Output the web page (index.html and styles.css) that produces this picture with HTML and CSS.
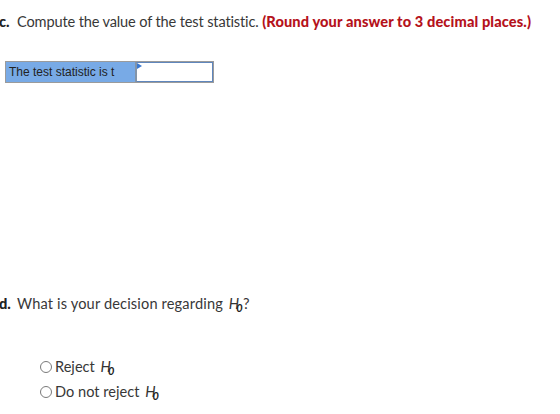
FILE: index.html
```html
<!DOCTYPE html>
<html>
<head>
	<meta charset="utf-8">
	<title>Hypothesis test</title>
	<link rel="stylesheet" href="styles.css">
</head>
<body>

	<div class="part part-c">
		<p class="prompt"><b class="letter">c.</b>Compute the value of the test statistic. <strong class="hint">(Round your answer to 3 decimal places.)</strong></p>

		<div class="answer-table">
			<div class="answer-label">The test statistic is t</div>
			<div class="answer-cell"><span class="flag"></span><input class="answer-input" type="text"></div>
		</div>
	</div>

	<div class="part part-d">
		<p class="prompt"><b class="letter">d.</b>What is your decision regarding <span class="hyp"><i>H</i><sub>0</sub></span>?</p>

		<ul class="choices">
			<li><label><span class="radio"></span>Reject <span class="hyp"><i>H</i><sub>0</sub></span></label></li>
			<li><label><span class="radio"></span>Do not reject <span class="hyp"><i>H</i><sub>0</sub></span></label></li>
		</ul>
	</div>

</body>
</html>
```

FILE: styles.css
```css
body {
	margin: 0;
	background-color: #ffffff;
	color: #383838;
	font-family: "Lato", "Open Sans", sans-serif;
	font-size: 14.6px;
}

.prompt {
	margin: 0;
	line-height: 20px;
}

.part-c .prompt {
	letter-spacing: -0.15px;
}

.part-d .prompt {
	letter-spacing: 0.15px;
}

.letter {
	display: inline-block;
	width: 18px;
	margin-left: -1px;
	font-weight: 900;
	letter-spacing: 0;
	color: #222222;
}

.hint {
	font-weight: 900;
	letter-spacing: 0.12px;
	color: #b5121b;
}

.part-c {
	padding-top: 12px;
}

/* answer box: blue label cell next to the input */
.answer-table {
	display: flex;
	width: 207px;
	height: 20px;
	margin: 29px 0 0 5px;
	border: 1px solid #9b9b9b;
}

.answer-label {
	width: 126px;
	padding-left: 3px;
	background-color: #78aae6;
	border-right: 1px solid #8394a8;
	font-family: "Liberation Sans", Arial, sans-serif;
	font-size: 12px;
	line-height: 20px;
	color: #222222;
}

.answer-cell {
	position: relative;
	flex: 1;
}

.answer-input {
	box-sizing: border-box;
	width: 100%;
	height: 100%;
	margin: 0;
	border: 1px solid #5f86bd;
	border-left: 1px solid #8394a8;
	outline: none;
	background: #ffffff;
}

.flag {
	position: absolute;
	left: 1px;
	top: 1px;
	width: 0;
	height: 0;
	border-top: 3px solid transparent;
	border-bottom: 3px solid transparent;
	border-left: 5px solid #3a78d0;
}

.part-d {
	padding-top: 211px;
}

.hyp {
	margin-left: 2px;
}

.hyp i {
	font-style: italic;
	color: #333333;
}

.hyp sub {
	font-size: 11px;
	line-height: 0;
	font-style: italic;
	font-weight: bold;
	color: #222222;
	margin-left: -3px;
	vertical-align: -3px;
}

.choices {
	list-style: none;
	margin: 40px 0 0 0;
	padding: 0 0 0 40px;
}

.choices li {
	line-height: 25px;
}

.radio {
	display: inline-block;
	width: 10px;
	height: 10px;
	margin-right: 3px;
	border: 1px solid #7a7a7a;
	border-radius: 50%;
	vertical-align: -1px;
}
```
